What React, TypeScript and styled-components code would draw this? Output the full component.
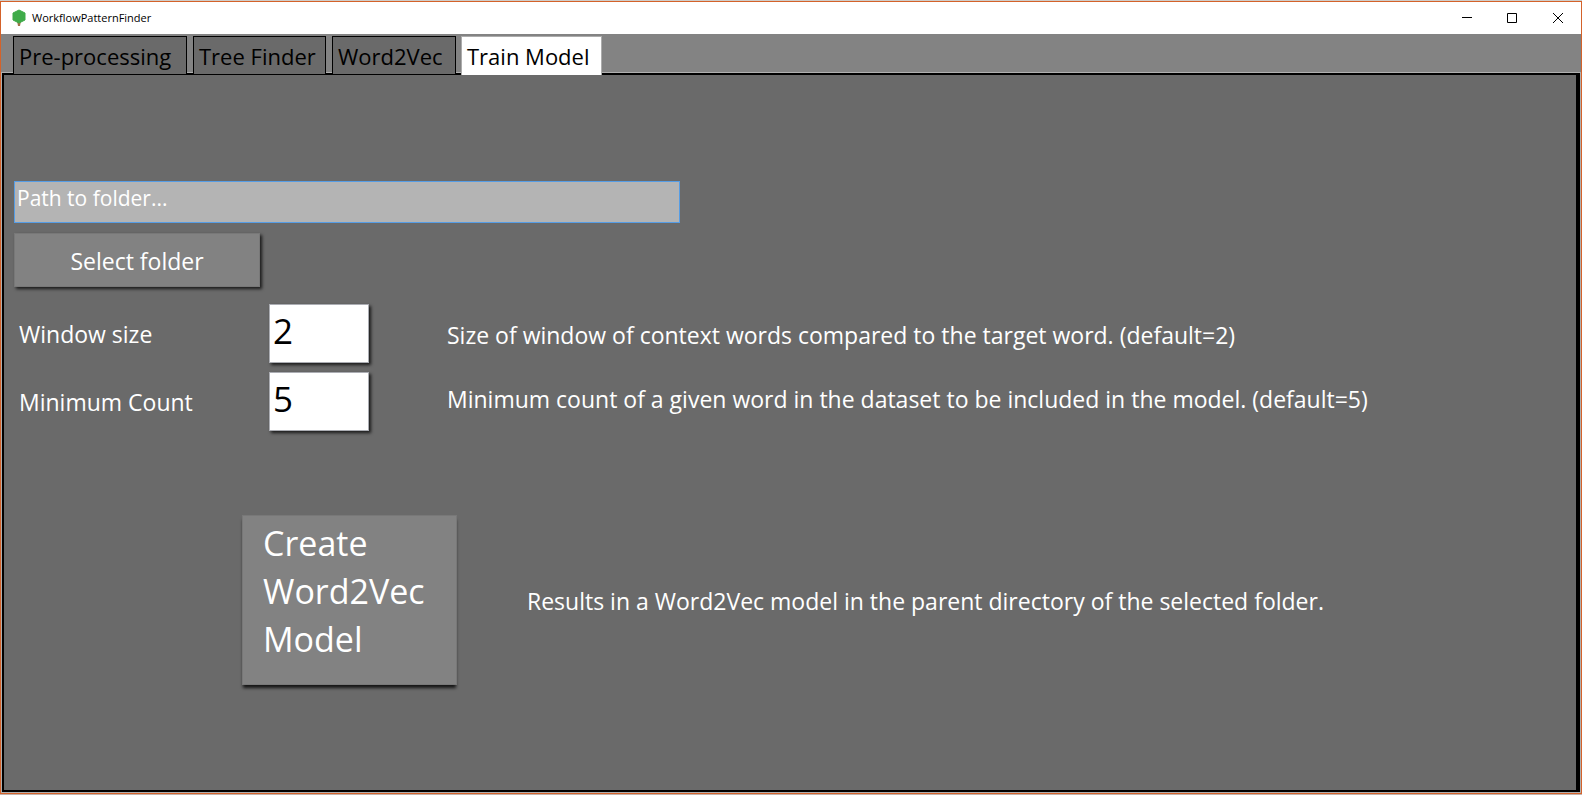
import React from "react";
import styled, { createGlobalStyle, css } from "styled-components";

const GlobalStyle = createGlobalStyle`
  *, *::before, *::after { box-sizing: border-box; }
  body {
    margin: 0;
    font-family: "Open Sans", "Noto Sans", sans-serif;
    font-size: 23px;
    line-height: 32px;
    color: #fff;
  }
  button, input { font: inherit; color: inherit; margin: 0; border-radius: 0; }
`;

const Desktop = styled.div`
  min-height: 100vh;
  display: flex;
  flex-direction: column;
  padding: 1px 0;
  background: linear-gradient(#cfcdca 50%, #c4b2aa 50%);
`;

const Window = styled.div`
  flex: 1;
  display: flex;
  flex-direction: column;
  border: 1px solid #d4622a;
  background: #838383;
`;

const TitleBar = styled.header`
  display: flex;
  align-items: center;
  height: 32px;
  padding-left: 10px;
  background: #fff;
  color: #000;
`;

const Title = styled.h1`
  flex: 1;
  margin: 0 0 0 5px;
  font-size: 11px;
  line-height: 16px;
  font-weight: 400;
`;

const CaptionButton = styled.button`
  display: grid;
  place-items: center;
  width: 46px;
  height: 32px;
  padding: 0;
  border: 0;
  background: transparent;
`;

const TabStrip = styled.nav`
  display: grid;
  grid-template-columns: 174px 133px 124px 140px;
  column-gap: 6px;
  padding: 2px 12px 0;
`;

const Tab = styled.button<{ $selected?: boolean }>`
  position: relative;
  height: 38px;
  margin-bottom: -1px;
  padding: 1px 0 0 5px;
  border: 1px solid #000;
  border-bottom: 0;
  background: #6a6a6a;
  color: #000;
  font-size: 22px;
  text-align: left;
  white-space: nowrap;
  ${(p) =>
    p.$selected &&
    css`
      height: 39px;
      margin: 0 0 -2px -1px;
      padding-bottom: 1px;
      background: #fff;
      border-color: #acacac;
    `}
`;

const Panel = styled.main`
  flex: 1;
  display: flex;
  flex-direction: column;
  align-items: flex-start;
  margin: 0 1px 1px;
  padding: 106px 10px 40px;
  border: 2px solid #000;
  border-right-width: 4px;
  outline: 1px solid #b0b0b0;
  background: #6a6a6a;
`;

const PathInput = styled.input`
  width: 666px;
  max-width: 100%;
  height: 42px;
  padding: 0 2px 8px;
  border: 1px solid #569de5;
  background: #b4b4b4;
  font-size: 21px;
  outline: 0;
  &::placeholder { color: #fff; opacity: 1; }
`;

const ActionButton = styled.button`
  border: 1px solid #787878;
  background: #828282;
  box-shadow: 2px 2px 3px rgba(0, 0, 0, 0.75);
`;

const SelectButton = styled(ActionButton)`
  width: 246px;
  height: 54px;
  margin-top: 10px;
  padding: 2px 0 0;
`;

const Options = styled.div`
  display: flex;
  align-items: flex-start;
  gap: 78px;
  margin-top: 17px;
  padding-left: 5px;
`;

const Fields = styled.div`
  flex: none;
  display: grid;
  grid-template-columns: 250px 100px;
  row-gap: 9px;
  align-items: center;
`;

const NumberInput = styled.input`
  width: 100px;
  height: 59px;
  padding: 0 3px 6px;
  border: 1px solid #abadb3;
  background: #fff;
  color: #000;
  font-size: 35px;
  outline: 0;
  box-shadow: 2px 2px 3px rgba(0, 0, 0, 0.75);
`;

const Hints = styled.div`
  display: flex;
  flex-direction: column;
  gap: 32px;
  padding-top: 15px;
`;

const Hint = styled.p`
  margin: 0;
`;

const CreateRow = styled.div`
  display: flex;
  align-items: center;
  gap: 70px;
  margin: 84px 0 0 228px;
`;

const CreateButton = styled(ActionButton)`
  flex: none;
  width: 215px;
  height: 170px;
  padding: 0 20px 18px;
  font-size: 34px;
  line-height: 48px;
  text-align: left;
  box-shadow: 0 4px 3px -1px rgba(0, 0, 0, 0.8);
`;

const Result = styled(Hint)`
  padding-top: 2px;
`;

const TreeLogo = () => (
  <svg width="16" height="18" viewBox="0 0 16 18" aria-hidden="true">
    <path d="M6 12h4l-1 5H7z" fill="#a0714a" />
    <path d="M8 1l6 3v7l-6 3-6-3V4z" fill="#3fab49" stroke="#3fab49" strokeLinejoin="round" />
  </svg>
);

const CaptionIcon = ({ d }: { d: string }) => (
  <svg width="12" height="12" viewBox="0 0 12 12" fill="none" stroke="#000" aria-hidden="true">
    <path d={d} />
  </svg>
);

const captionButtons = [
  { label: "Minimize", d: "M2 5.5h10" },
  { label: "Maximize", d: "M1.5 1.5h9v9h-9z" },
  { label: "Close", d: "M1 1l10 10M11 1L1 11" },
];

const tabs = ["Pre-processing", "Tree Finder", "Word2Vec", "Train Model"];

const options = [
  {
    id: "window-size",
    label: "Window size",
    value: "2",
    hint: "Size of window of context words compared to the target word. (default=2)",
  },
  {
    id: "minimum-count",
    label: "Minimum Count",
    value: "5",
    hint: "Minimum count of a given word in the dataset to be included in the model. (default=5)",
  },
];

export default function App() {
  return (
    <Desktop>
      <GlobalStyle />
      <Window>
        <TitleBar>
          <TreeLogo />
          <Title>WorkflowPatternFinder</Title>
          {captionButtons.map((b) => (
            <CaptionButton key={b.label} type="button" aria-label={b.label}>
              <CaptionIcon d={b.d} />
            </CaptionButton>
          ))}
        </TitleBar>
        <TabStrip>
          {tabs.map((t) => (
            <Tab key={t} type="button" $selected={t === "Train Model"}>
              {t}
            </Tab>
          ))}
        </TabStrip>
        <Panel>
          <PathInput type="text" placeholder="Path to folder..." aria-label="Path to folder" />
          <SelectButton type="button">Select folder</SelectButton>
          <Options>
            <Fields>
              {options.map((o) => (
                <React.Fragment key={o.id}>
                  <label htmlFor={o.id}>{o.label}</label>
                  <NumberInput
                    id={o.id}
                    type="text"
                    defaultValue={o.value}
                    aria-describedby={`${o.id}-hint`}
                  />
                </React.Fragment>
              ))}
            </Fields>
            <Hints>
              {options.map((o) => (
                <Hint key={o.id} id={`${o.id}-hint`}>
                  {o.hint}
                </Hint>
              ))}
            </Hints>
          </Options>
          <CreateRow>
            <CreateButton type="button">Create Word2Vec Model</CreateButton>
            <Result>Results in a Word2Vec model in the parent directory of the selected folder.</Result>
          </CreateRow>
        </Panel>
      </Window>
    </Desktop>
  );
}
